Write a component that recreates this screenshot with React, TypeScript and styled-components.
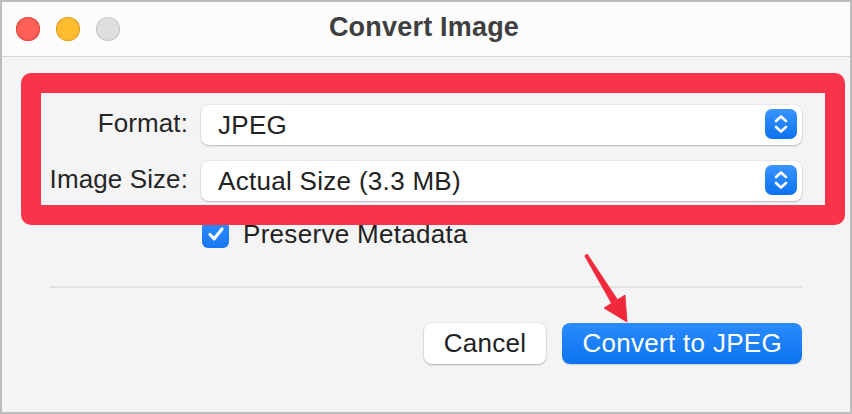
import React from 'react';
import styled, { createGlobalStyle } from 'styled-components';

const Global = createGlobalStyle`
  html, body { margin: 0; padding: 0; background: #ffffff; }
  body { font-family: "Liberation Sans", Arial, sans-serif; letter-spacing: 0.3px; }
  * { box-sizing: border-box; }
`;

const Window = styled.div`
  position: relative;
  width: 852px;
  height: 414px;
  border: 2px solid #bdbdbd;
  background: #f4f4f4;
  display: flex;
  flex-direction: column;
  overflow: hidden;
`;

const TitleBar = styled.header`
  flex: none;
  height: 55px;
  background: #fcfcfc;
  border-bottom: 1px solid #d6d6d6;
  display: grid;
  grid-template-columns: 1fr auto 1fr;
  align-items: center;
  padding: 0 18px 0 14px;
`;

const Lights = styled.div`
  display: flex;
  gap: 16px;
`;

const Light = styled.span<{ $fill: string; $edge: string }>`
  width: 24px;
  height: 24px;
  border-radius: 50%;
  background: ${(p) => p.$fill};
  box-shadow: inset 0 0 0 1px ${(p) => p.$edge};
`;

const Title = styled.h1`
  margin: 0;
  font-size: 27px;
  font-weight: 700;
  letter-spacing: 0.2px;
  color: #3f3f3f;
  line-height: 30px;
  padding-bottom: 4px;
`;

const Body = styled.main`
  flex: 1;
  display: flex;
  flex-direction: column;
  padding: 16px 5px 0 19px;
`;

const Highlight = styled.section`
  position: relative;
  z-index: 1;
  border: 20px solid #f8334a;
  border-radius: 10px;
  background: #f4f4f4;
  padding: 12px 23px 4px 0;
  display: grid;
  grid-template-columns: 147px 1fr;
  column-gap: 13px;
  row-gap: 16px;
  align-items: center;
`;

const Label = styled.label`
  text-align: right;
  font-size: 26px;
  line-height: 30px;
  letter-spacing: 0.1px;
  color: #262626;
  padding-bottom: 4px;
  white-space: nowrap;
`;

const Popup = styled.div`
  height: 40px;
  background: #ffffff;
  border-radius: 8px;
  box-shadow: 0 0 0 0.5px rgba(0, 0, 0, 0.08), 0 1px 2px rgba(0, 0, 0, 0.22);
  display: flex;
  align-items: center;
  justify-content: space-between;
  padding: 0 5px 0 17px;
  font-size: 26px;
  color: #222222;
`;

const Stepper = styled.span`
  width: 32px;
  height: 30px;
  margin-bottom: 2px;
  border-radius: 7px;
  background: linear-gradient(#3a95fe, #0c71ef);
  display: flex;
  align-items: center;
  justify-content: center;
`;

const CheckRow = styled.div`
  display: flex;
  align-items: center;
  gap: 14px;
  margin-top: -6px;
  padding-left: 181px;
  font-size: 26px;
  line-height: 30px;
  color: #222222;
`;

const Checkbox = styled.span`
  width: 27px;
  height: 27px;
  border-radius: 6px;
  background: linear-gradient(#2f8cfc, #1677f2);
  display: flex;
  align-items: center;
  justify-content: center;
`;

const Divider = styled.hr`
  border: none;
  height: 2px;
  background: #e1e1e1;
  margin: 37px 43px 0 29px;
`;

const ButtonRow = styled.div`
  display: flex;
  justify-content: flex-end;
  gap: 16px;
  margin-top: 35px;
  padding-right: 43px;
`;

const Button = styled.button<{ $primary?: boolean }>`
  height: 41px;
  border: none;
  border-radius: 8px;
  font-family: "Liberation Sans", Arial, sans-serif;
  letter-spacing: 0.3px;
  font-size: 26px;
  padding: 0 20px;
  color: ${(p) => (p.$primary ? '#ffffff' : '#222222')};
  background: ${(p) => (p.$primary ? 'linear-gradient(#2b8bfd, #0c73f0)' : '#ffffff')};
  box-shadow: ${(p) =>
    p.$primary
      ? '0 1px 1.5px rgba(0, 0, 0, 0.15)'
      : '0 0 0 0.5px rgba(0, 0, 0, 0.08), 0 1px 2px rgba(0, 0, 0, 0.25)'};
`;

const Arrow = styled.svg`
  position: absolute;
  left: 576px;
  top: 246px;
  z-index: 2;
`;

const Chevrons = () => (
  <svg width="32" height="30" viewBox="0 0 32 30">
    <path d="M11 12 L16 7.5 L21 12 M11 18 L16 22.5 L21 18" fill="none" stroke="#fff" strokeWidth="2.6" strokeLinecap="round" strokeLinejoin="round" />
  </svg>
);

export default function App() {
  return (
    <>
      <Global />
      <Window>
        <TitleBar>
          <Lights>
            <Light $fill="#fe5f57" $edge="#e2463f" />
            <Light $fill="#febc2e" $edge="#dfa023" />
            <Light $fill="#dedede" $edge="#c8c8c8" />
          </Lights>
          <Title>Convert Image</Title>
          <span />
        </TitleBar>
        <Body>
          <Highlight>
            <Label>Format:</Label>
            <Popup>
              JPEG
              <Stepper><Chevrons /></Stepper>
            </Popup>
            <Label>Image Size:</Label>
            <Popup>
              Actual Size (3.3 MB)
              <Stepper><Chevrons /></Stepper>
            </Popup>
          </Highlight>
          <CheckRow>
            <Checkbox>
              <svg width="18" height="16" viewBox="0 0 18 16">
                <path d="M3 8.5 L7.2 12.8 L15 3" fill="none" stroke="#fff" strokeWidth="3.2" strokeLinecap="round" strokeLinejoin="round" />
              </svg>
            </Checkbox>
            Preserve Metadata
          </CheckRow>
          <Divider />
          <ButtonRow>
            <Button>Cancel</Button>
            <Button $primary>Convert to JPEG</Button>
          </ButtonRow>
        </Body>
        <Arrow width="60" height="80" viewBox="578 248 60 80">
          <polygon
            points="584.7,255.8 587.3,254.2 617.5,299.7 625,295 627,322 604,308 611.5,303.3"
            fill="#f0283c"
            stroke="#f0283c"
            strokeWidth="0.8"
            strokeLinejoin="round"
          />
        </Arrow>
      </Window>
    </>
  );
}
